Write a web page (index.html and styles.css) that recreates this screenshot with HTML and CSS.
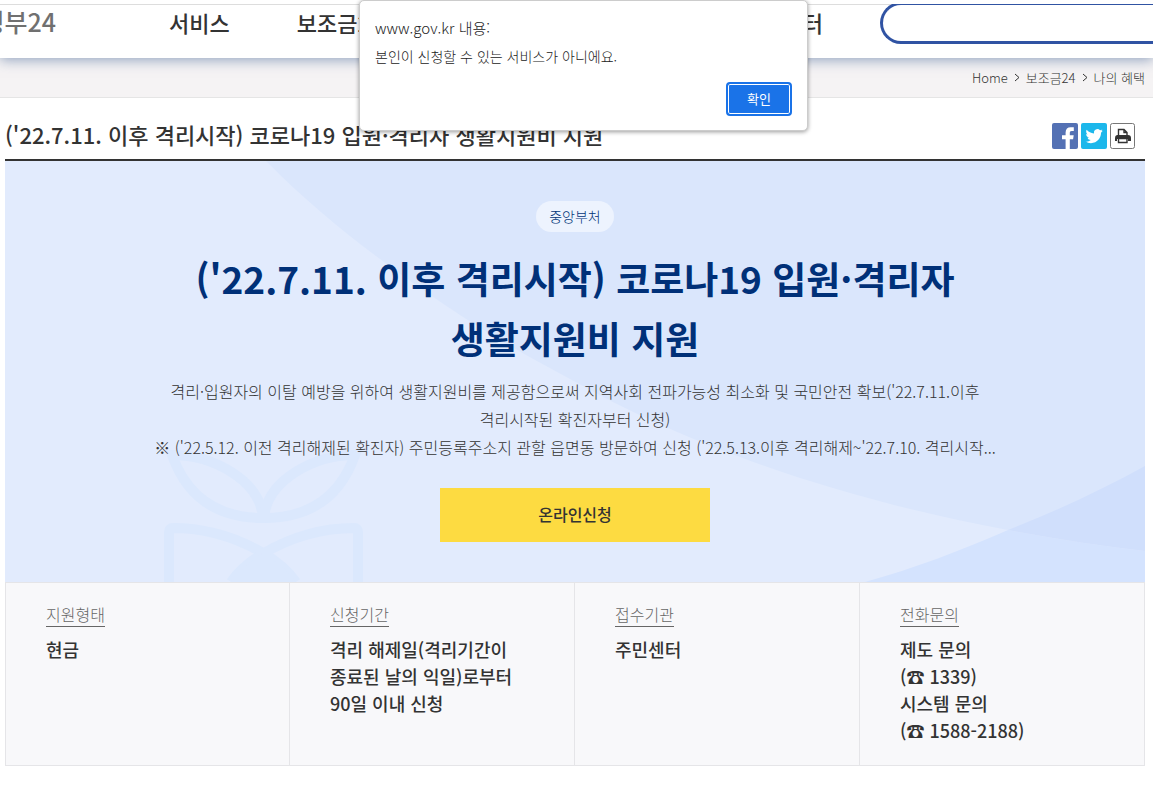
FILE: index.html
```html
<!DOCTYPE html>
<html lang="ko">
<head>
  <meta charset="UTF-8">
  <meta name="viewport" content="width=device-width, initial-scale=1.0">
  <title>보조금24 | 정부24</title>
  <link rel="stylesheet" href="styles.css">
</head>
<body>
  <header class="header">
    <a class="logo" href="#">정부24</a>
    <nav class="menu">
      <a href="#">서비스</a>
      <a href="#">보조금24</a>
      <a href="#">고객센터</a>
    </nav>
    <input class="search" type="text" aria-label="검색어">
  </header>

  <div class="location">
    <a href="#">Home</a>
    <svg width="6" height="9" viewBox="0 0 6 9"><path d="M1 1l4 3.5L1 8" fill="none" stroke="#333"/></svg>
    <a href="#">보조금24</a>
    <svg width="6" height="9" viewBox="0 0 6 9"><path d="M1 1l4 3.5L1 8" fill="none" stroke="#333"/></svg>
    <a href="#">나의 혜택</a>
  </div>

  <main class="container">
    <div class="title-bar">
      <h1>('22.7.11. 이후 격리시작) 코로나19 입원·격리자 생활지원비 지원</h1>
      <div class="sns">
        <a href="#" aria-label="페이스북">
          <svg width="26" height="26" viewBox="0 0 26 26">
            <rect width="26" height="26" rx="2" fill="#5471b4"/>
            <path d="M13.6 26V16.2H10v-4h3.6V9.4c0-3.400 2-5.200 5-5.200h3.200v3.800h-2.100c-1.500 0-1.900.8-1.900 1.900v2.300h3.900l-.6 4h-3.300V26z" fill="#fff"/>
          </svg>
        </a>
        <a href="#" aria-label="트위터">
          <svg width="26" height="26" viewBox="0 0 26 26">
            <rect width="26" height="26" rx="2" fill="#1cb7eb"/>
            <path transform="translate(4.500 4.500) scale(.72)" d="M23.950 4.570a10 10 0 0 1-2.820.770 4.960 4.960 0 0 0 2.160-2.720c-.95.550-2 .950-3.130 1.180a4.920 4.920 0 0 0-8.380 4.480C7.690 8.100 4.070 6.130 1.640 3.160a4.820 4.820 0 0 0-.67 2.480c0 1.710.870 3.210 2.190 4.100a4.900 4.900 0 0 1-2.230-.620v.060a4.920 4.920 0 0 0 3.950 4.830 5 5 0 0 1-2.210.080 4.940 4.940 0 0 0 4.600 3.420A9.870 9.870 0 0 1 0 19.540a13.990 13.990 0 0 0 7.550 2.210c9.050 0 14-7.500 14-13.980 0-.210 0-.420-.020-.630a9.940 9.940 0 0 0 2.460-2.550z" fill="#fff"/>
          </svg>
        </a>
        <a href="#" aria-label="인쇄">
          <svg width="25" height="26" viewBox="0 0 25 26">
            <rect x=".5" y=".5" width="24" height="25" rx="2" fill="#fff" stroke="#777"/>
            <path d="M8.500 12.500v-6h5.500l3 3v3M14 6.500v3h3" fill="none" stroke="#333" stroke-width="1.400"/>
            <path d="M7 12h11a3 3 0 0 1 3 3v3h-3v-2H7v2H5v-3a3 3 0 0 1 2-3z" fill="#333"/>
            <path d="M8.500 15.500h8.500v4H8.500z" fill="#fff" stroke="#333" stroke-width="1.400"/>
          </svg>
        </a>
      </div>
    </div>

    <section class="visual">
      <svg class="visual-bg" viewBox="0 0 1140 421" preserveAspectRatio="none" aria-hidden="true">
        <path fill="#e2ebfd" d="M0 0H261C310 50 365 92 418 129C465 162 515 192 567 219C620 249 680 276 735 296C820 328 912 352 1003 369C1050 378 1095 385 1140 390V421H0z"/>
        <path fill="#d4e3fe" d="M860 421C908 408 957 389 1003 369C1050 378 1095 385 1140 390V421z"/>
        <path fill="#d0dffc" d="M1003 369C1052 350 1098 328 1140 305V390C1095 385 1050 378 1003 369z"/>
        <g fill="none" stroke="#dbe8fd" stroke-width="10">
          <path d="M167 294C182 336 212 357 258 357C255 319 208 294 167 294z"/>
          <path d="M350 294C335 336 305 357 259 357C262 319 309 294 350 294z"/>
          <path d="M164 421V371q0-4 4-4C201 367 232 377 258 392C272 400 284 411 291 421"/>
          <path d="M353 421V371q0-4-4-4C316 367 285 377 259 392C245 400 233 411 226 421"/>
        </g>
        <path fill="#dbe8fd" d="M226 421C234 410 246 400 258 392C271 400 283 410 291 421z"/>
      </svg>
      <span class="badge">중앙부처</span>
      <h2>('22.7.11. 이후 격리시작) 코로나19 입원·격리자<br>생활지원비 지원</h2>
      <p>격리·입원자의 이탈 예방을 위하여 생활지원비를 제공함으로써 지역사회 전파가능성 최소화 및 국민안전 확보('22.7.11.이후<br>격리시작된 확진자부터 신청)<br>※ ('22.5.12. 이전 격리해제된 확진자) 주민등록주소지 관할 읍면동 방문하여 신청 ('22.5.13.이후 격리해제~'22.7.10. 격리시작...</p>
      <button class="btn-apply" type="button">온라인신청</button>
    </section>

    <dl class="info">
      <div>
        <dt>지원형태</dt>
        <dd>현금</dd>
      </div>
      <div>
        <dt>신청기간</dt>
        <dd>격리 해제일(격리기간이<br>종료된 날의 익일)로부터<br>90일 이내 신청</dd>
      </div>
      <div>
        <dt>접수기관</dt>
        <dd>주민센터</dd>
      </div>
      <div>
        <dt>전화문의</dt>
        <dd>제도 문의<br>(☎ 1339)<br>시스템 문의<br>(☎ 1588-2188)</dd>
      </div>
    </dl>
  </main>

  <dialog class="alert" open>
    <h3>www.gov.kr 내용:</h3>
    <p>본인이 신청할 수 있는 서비스가 아니에요.</p>
    <form method="dialog">
      <button type="submit">확인</button>
    </form>
  </dialog>
</body>
</html>
```

FILE: styles.css
```css
* {
  box-sizing: border-box;
}
body {
  margin: 0;
  padding-top: 4px;
  background-color: #fff;
  color: #333;
  font-family: "Noto Sans CJK KR", sans-serif;
}
h1, h2, h3, p, dl, dd {
  margin: 0;
}
a {
  color: inherit;
  text-decoration: none;
}
button {
  font-family: inherit;
  cursor: pointer;
}

/* header */
.header {
  position: relative;
  display: flex;
  height: 54px;
  border-top: 1px solid #ddd;
  background-color: #fff;
  box-shadow: 0 2px 12px rgba(48, 83, 140, 0.5);
  clip-path: inset(0 0 -20px 0);
}
.logo {
  display: flex;
  justify-content: flex-end;
  width: 56px;
  margin-right: 113px;
  color: #707070;
  font-size: 25px;
  font-weight: 500;
  line-height: 32px;
  white-space: nowrap;
}
.menu {
  display: flex;
  flex: 1;
  gap: 67px;
  font-size: 22px;
  font-weight: 500;
  line-height: 34px;
  white-space: nowrap;
}
.menu a:last-child {
  margin-left: auto;
}
.search {
  width: 273px;
  height: 42px;
  margin: -3px 0 0 57px;
  padding: 0 20px;
  border: 3px solid #3053a3;
  border-right: 0;
  border-radius: 21px 0 0 21px;
  background-color: #fff;
}

/* location */
.location {
  display: flex;
  justify-content: flex-end;
  align-items: center;
  gap: 6px;
  height: 40px;
  padding-right: 8px;
  border-bottom: 1px solid #e5e5e5;
  background-color: #f5f3f4;
  font-size: 13px;
  font-weight: 300;
}

.container {
  padding: 0 8px 0 5px;
}
.title-bar {
  display: flex;
  justify-content: space-between;
  align-items: center;
  height: 63px;
  padding-top: 15px;
  padding-right: 10px;
  border-bottom: 2px solid #333;
}
.title-bar h1 {
  padding-bottom: 4px;
  font-size: 22px;
  font-weight: 500;
  line-height: 30px;
}
.sns {
  display: flex;
  gap: 3px;
}
.sns svg {
  display: block;
}

/* visual */
.visual {
  position: relative;
  display: flex;
  flex-direction: column;
  align-items: center;
  padding: 40px 20px;
  background-color: #dae6fc;
  text-align: center;
}
.visual-bg {
  position: absolute;
  inset: 0;
  width: 100%;
  height: 100%;
}
.visual > :not(svg) {
  position: relative;
}
.badge {
  padding: 0 13px;
  border-radius: 16px;
  background-color: #edf3fe;
  color: #003478;
  font-size: 14px;
  font-weight: 300;
  line-height: 31px;
}
.visual h2 {
  margin-top: 16px;
  color: #003078;
  font-size: 37px;
  font-weight: 700;
  line-height: 60px;
}
.visual p {
  margin-top: 9px;
  font-size: 16px;
  font-weight: 300;
  line-height: 28px;
}
.btn-apply {
  width: 270px;
  height: 54px;
  margin-top: 27px;
  padding: 0 0 2px;
  border: 0;
  background-color: #fddb41;
  color: #333;
  font-size: 16px;
  font-weight: 500;
}

/* info */
.info {
  display: grid;
  grid-template-columns: repeat(4, 1fr);
  border-top: 1px solid #e5e5e8;
  border-bottom: 1px solid #e5e5e8;
  background-color: #f8f8fa;
}
.info > div {
  padding: 19px 20px 21px 40px;
  border-right: 1px solid #e5e5e8;
}
.info > div:first-child {
  border-left: 1px solid #e5e5e8;
}
.info dt {
  display: inline-block;
  border-bottom: 1px solid #666;
  color: #666;
  font-size: 16px;
  font-weight: 300;
  line-height: 23px;
}
.info dd {
  margin-top: 9px;
  font-size: 18px;
  font-weight: 500;
  line-height: 27px;
}

/* alert */
.alert {
  position: absolute;
  top: 0;
  left: 359px;
  width: 449px;
  margin: 0;
  padding: 14px 15px;
  border: 1px solid #ccc;
  border-radius: 5px;
  background-color: #fff;
  color: #222;
  box-shadow: 0 1px 4px rgba(0, 0, 0, 0.4);
}
.alert h3 {
  font-size: 15px;
  font-weight: 300;
  line-height: 26px;
}
.alert p {
  margin-top: 2px;
  font-size: 14px;
  font-weight: 300;
  line-height: 26px;
}
.alert form {
  display: flex;
  justify-content: flex-end;
  margin-top: 13px;
}
.alert button {
  width: 66px;
  height: 34px;
  padding: 0 0 2px;
  border: 2px solid #1a73e8;
  border-radius: 4px;
  background-color: #1a73e8;
  box-shadow: inset 0 0 0 1px #fff;
  color: #fff;
  font-size: 13px;
  outline: 0;
}
```
